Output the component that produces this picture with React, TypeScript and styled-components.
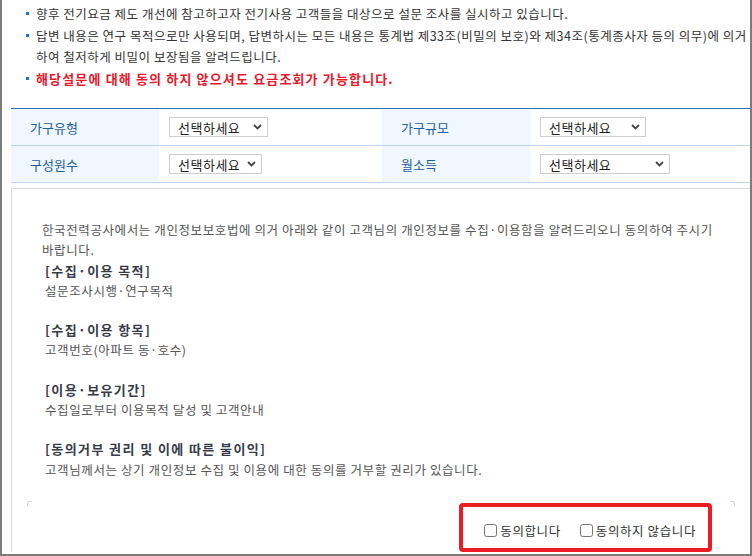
import React from 'react';
import styled, { createGlobalStyle } from 'styled-components';

const GlobalStyle = createGlobalStyle`
  html, body {
    margin: 0;
    padding: 0;
    background: #fff;
  }
  body {
    font-family: "Noto Sans CJK KR", "Noto Sans", sans-serif;
    color: #333;
  }
`;

const fields = [
  [
    { label: '가구유형', width: 99 },
    { label: '가구규모', width: 106 },
  ],
  [
    { label: '구성원수', width: 93 },
    { label: '월소득', width: 130 },
  ],
];

const sections = [
  { title: '[수집·이용 목적]', body: '설문조사시행·연구목적' },
  { title: '[수집·이용 항목]', body: '고객번호(아파트 동·호수)' },
  { title: '[이용·보유기간]', body: '수집일로부터 이용목적 달성 및 고객안내' },
  {
    title: '[동의거부 권리 및 이에 따른 불이익]',
    body: '고객님께서는 상기 개인정보 수집 및 이용에 대한 동의를 거부할 권리가 있습니다.',
  },
];

const Chevron = () => (
  <svg width="9" height="6" viewBox="0 0 9 6">
    <path d="M1 1 L4.5 4.5 L8 1" fill="none" stroke="#444" strokeWidth="1.8" />
  </svg>
);

const App: React.FC = () => {
  return (
    <Frame>
      <GlobalStyle />
      <NoticeList>
        <Notice>향후 전기요금 제도 개선에 참고하고자 전기사용 고객들을 대상으로 설문 조사를 실시하고 있습니다.</Notice>
        <Notice>
          답변 내용은 연구 목적으로만 사용되며, 답변하시는 모든 내용은 통계법 제33조(비밀의 보호)와 제34조(통계종사자 등의 의무)에 의거
          <br />
          하여 철저하게 비밀이 보장됨을 알려드립니다.
        </Notice>
        <Notice $warn>해당설문에 대해 동의 하지 않으셔도 요금조회가 가능합니다.</Notice>
      </NoticeList>

      <InfoTable>
        {fields.map((row, i) => (
          <Row key={i}>
            {row.map((f) => (
              <React.Fragment key={f.label}>
                <LabelCell>{f.label}</LabelCell>
                <ValueCell>
                  <FakeSelect $w={f.width}>
                    <span>선택하세요</span>
                    <Chevron />
                  </FakeSelect>
                </ValueCell>
              </React.Fragment>
            ))}
          </Row>
        ))}
      </InfoTable>

      <TermsBox>
        <TermsText>
          <Intro>
            한국전력공사에서는 개인정보보호법에 의거 아래와 같이 고객님의 개인정보를 수집·이용함을 알려드리오니 동의하여 주시기 바랍니다.
          </Intro>
          {sections.map((s) => (
            <Section key={s.title}>
              <SectionTitle>{s.title}</SectionTitle>
              <SectionBody>{s.body}</SectionBody>
            </Section>
          ))}
        </TermsText>
        <AgreeBar>
          <AgreeGroup>
            <Choice>
              <input type="checkbox" name="agree" />
              동의합니다
            </Choice>
            <Choice>
              <input type="checkbox" name="disagree" />
              동의하지 않습니다
            </Choice>
          </AgreeGroup>
        </AgreeBar>
      </TermsBox>
    </Frame>
  );
};

export default App;

const Frame = styled.div`
  width: 752px;
  height: 556px;
  box-sizing: border-box;
  border: 2px solid #7c7c7c;
  border-top: none;
  overflow: hidden;
  background: #fff;
`;

const NoticeList = styled.ul`
  list-style: none;
  margin: 0;
  padding: 3px 0 0 24px;
`;

const Notice = styled.li<{ $warn?: boolean }>`
  position: relative;
  padding-left: 10px;
  font-size: ${(p) => (p.$warn ? '13px' : '12.5px')};
  font-weight: ${(p) => (p.$warn ? 700 : 400)};
  letter-spacing: ${(p) => (p.$warn ? '1.15px' : '0.5px')};
  line-height: 21.5px;
  color: ${(p) => (p.$warn ? '#e8182c' : '#333')};
  white-space: nowrap;

  &::before {
    content: '';
    position: absolute;
    left: 0;
    top: 9px;
    width: 3px;
    height: 3px;
    background: #1f72c4;
  }
`;

const InfoTable = styled.div`
  margin: 19px 0 0 9px;
  border-top: 1px solid #2a72b8;
`;

const Row = styled.div`
  display: grid;
  grid-template-columns: 148px 223px 148px 1fr;
  height: 37px;
  border-bottom: 1px solid #b9d5ef;
  box-sizing: border-box;
`;

const LabelCell = styled.div`
  display: flex;
  align-items: center;
  padding-left: 19px;
  background: #f0f7fe;
  color: #1d5e9c;
  font-size: 13px;
`;

const ValueCell = styled.div`
  display: flex;
  align-items: center;
  padding-left: 10px;
`;

const FakeSelect = styled.div<{ $w: number }>`
  width: ${(p) => p.$w}px;
  height: 20px;
  box-sizing: border-box;
  border: 1px solid #cfcfcf;
  display: flex;
  align-items: center;
  justify-content: space-between;
  padding: 0 5px 0 8px;
  font-size: 13px;
  letter-spacing: 0.5px;
  color: #222;
`;

const TermsBox = styled.div`
  margin: 5px 0 0 9px;
  border: 1px solid #dcdcdc;
  border-right: none;
  border-bottom: none;
`;

const TermsText = styled.div`
  padding: 31px 34px 0 30px;
  font-size: 12.5px;
  letter-spacing: 0.6px;
  line-height: 20.3px;
  color: #555;
  word-break: keep-all;
`;

const Intro = styled.p`
  margin: 0;
`;

const Section = styled.div`
  padding-left: 3px;
  & + & {
    margin-top: 19px;
  }
`;

const SectionTitle = styled.div`
  font-size: 13px;
  font-weight: 700;
  letter-spacing: 1.4px;
  color: #363b4a;
`;

const SectionBody = styled.div`
  color: #555;
`;

const AgreeBar = styled.div`
  position: relative;
  margin: 21px 15px 0 15px;
  padding: 2px 23px 0 0;
  display: flex;
  justify-content: flex-end;

  &::before,
  &::after {
    content: '';
    position: absolute;
    top: 0;
    width: 4px;
    height: 4px;
    border-top: 1px solid #d6d6d6;
  }
  &::before {
    left: 0;
    border-left: 1px solid #d6d6d6;
    border-top-left-radius: 3px;
  }
  &::after {
    right: 0;
    border-right: 1px solid #d6d6d6;
    border-top-right-radius: 3px;
  }
`;

const AgreeGroup = styled.div`
  display: flex;
  align-items: center;
  gap: 19px;
  height: 49px;
  box-sizing: border-box;
  padding: 7px 12px 0 21px;
  border: 4px solid #ec1c26;
  border-radius: 4px;
`;

const Choice = styled.label`
  display: inline-flex;
  align-items: center;
  gap: 3px;
  font-size: 12.5px;
  letter-spacing: 0.6px;
  color: #333;
  cursor: pointer;

  input {
    width: 13px;
    height: 13px;
    margin: 0;
  }
`;
